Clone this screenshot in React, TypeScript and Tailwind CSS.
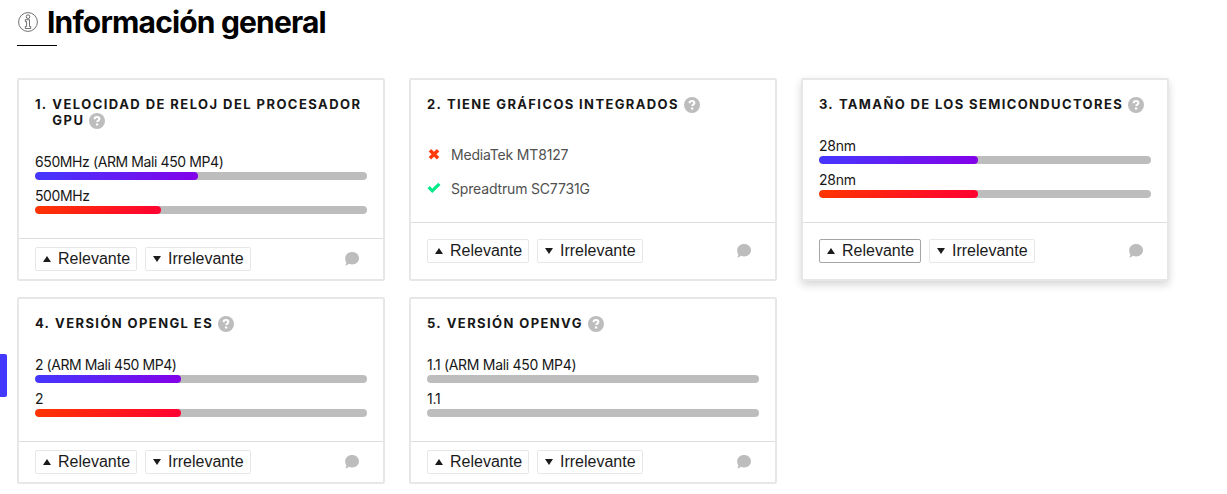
type Bar = { label: string; width: number };
type CardData = {
  n: number;
  title: string[];
  titleTracking: string;
  labelTracking?: string;
  bars?: Bar[];
  active?: boolean;
};

const cards: CardData[] = [
  {
    n: 1,
    title: ["VELOCIDAD DE RELOJ DEL PROCESADOR", "GPU"],
    titleTracking: "tracking-[1.44px]",
    labelTracking: "tracking-[-0.4px]",
    bars: [
      { label: "650MHz (ARM Mali 450 MP4)", width: 163 },
      { label: "500MHz", width: 126 },
    ],
  },
  { n: 2, title: ["TIENE GRÁFICOS INTEGRADOS"], titleTracking: "tracking-[1.37px]" },
  {
    n: 3,
    title: ["TAMAÑO DE LOS SEMICONDUCTORES"],
    titleTracking: "tracking-[1.37px]",
    labelTracking: "tracking-[-0.25px]",
    active: true,
    bars: [
      { label: "28nm", width: 159 },
      { label: "28nm", width: 159 },
    ],
  },
  {
    n: 4,
    title: ["VERSIÓN OPENGL ES"],
    titleTracking: "tracking-[1.4px]",
    labelTracking: "tracking-[-0.43px]",
    bars: [
      { label: "2 (ARM Mali 450 MP4)", width: 146 },
      { label: "2", width: 146 },
    ],
  },
  {
    n: 5,
    title: ["VERSIÓN OPENVG"],
    titleTracking: "tracking-[1.4px]",
    labelTracking: "tracking-[-0.3px]",
    bars: [
      { label: "1.1 (ARM Mali 450 MP4)", width: 0 },
      { label: "1.1", width: 0 },
    ],
  },
];

function Help() {
  return (
    <svg viewBox="0 0 16 16" className="h-4 w-4 shrink-0 translate-y-px">
      <circle cx="8" cy="8" r="8" fill="#bdbdbd" />
      <path d="M5.6 6.3C5.6 4.8 6.600 4 8 4s2.400.8 2.400 2.100c0 1.500-2.200 1.500-2.200 3" fill="none" stroke="#fff" strokeWidth="2" />
      <circle cx="8.1" cy="11.5" r="1.2" fill="#fff" />
    </svg>
  );
}

function InfoIcon() {
  return (
    <svg viewBox="0 0 20 20" className="h-5 w-5 shrink-0" fill="none" stroke="#333" strokeWidth="0.7">
      <circle cx="10" cy="10" r="9.4" />
      <circle cx="10" cy="4.7" r="1.8" />
      <path d="M7.300 7.700h4.200v6.800h1.200v2H7.300v-2h1.300V9.500H7.300z" />
    </svg>
  );
}

function Comment() {
  return (
    <svg viewBox="0 0 14 14" className="mr-2 h-3.5 w-3.5" fill="#bdbdbd">
      <path d="M7.1 0C11 0 14 2.7 14 6.3s-3 6.2-6.9 6.2c-1.2 0-2.3-.2-3.3-.7C2.8 12.900 1.500 13.500 0 13.500c.8-.9 1.300-1.900 1.300-3.100C.5 9.200.2 7.800.2 6.300.2 2.700 3.200 0 7.100 0z" />
    </svg>
  );
}

function Cross() {
  return (
    <svg viewBox="0 0 12 12" className="ml-px h-3 w-3 -translate-y-px" stroke="#ff3b0a" strokeWidth="3.5">
      <path d="M1.900 2.200 10.100 10.200M10.100 2.200 1.900 10.200" />
    </svg>
  );
}

function Check() {
  return (
    <svg viewBox="0 0 14 12" className="h-3 w-3.5 -translate-y-px" fill="none" stroke="#00e88a" strokeWidth="3.2">
      <path d="M1.600 5.200 5.300 8.800 12.400 1.800" />
    </svg>
  );
}

function Vote({ up, active }: { up?: boolean; active?: boolean }) {
  return (
    <button
      className={`flex h-6 items-center rounded-[2px] border pl-[7px] font-['Liberation_Sans',sans-serif] text-base leading-none text-[#1b1b1b] ${up ? "w-[102px]" : "w-[106px]"} ${active ? "border-[#a5a5a5]" : "border-[#e7e7e7]"}`}
    >
      <svg viewBox="0 0 8 6" className="mr-[7px] h-1.5 w-2" fill="#1b1b1b">
        <path d={up ? "M4 0 8 6H0z" : "M0 0h8L4 6z"} />
      </svg>
      {up ? "Relevante" : "Irrelevante"}
    </button>
  );
}

const fills = [
  "bg-[linear-gradient(135deg,#4338ff,#8500e8)]",
  "bg-[linear-gradient(135deg,#ff3600,#ff0033)]",
];

function Card({ card }: { card: CardData }) {
  return (
    <article
      className={`flex flex-col rounded-[2px] border-2 border-[#e7e7e7] bg-white ${card.active ? "shadow-[0_4px_8px_rgba(0,0,0,0.16)]" : ""}`}
    >
      <h3 className={`flex px-4 pt-4 text-[13px] leading-4 font-bold text-[#171717] ${card.titleTracking}`}>
        <span className="mr-[5px] tracking-[1.2px]">{card.n}.</span>
        <span>
          {card.title.map((line, i) => (
            <span key={line} className="flex h-4 items-center gap-[5px] whitespace-nowrap">
              {line}
              {i === card.title.length - 1 && <Help />}
            </span>
          ))}
        </span>
      </h3>
      {card.bars ? (
        <div className="flex flex-col gap-2 px-4 pt-[26px] pb-6">
          {card.bars.map((bar, i) => (
            <div key={i}>
              <div className={`mb-0.5 h-4 text-sm leading-4 text-[#171717] ${card.labelTracking}`}>{bar.label}</div>
              <div className="h-2 overflow-hidden rounded-full bg-[#bdbdbd]">
                <div className={`h-2 rounded-full ${fills[i]}`} style={{ width: bar.width }} />
              </div>
            </div>
          ))}
        </div>
      ) : (
        <ul className="px-4 pt-[26px] pb-4 text-sm tracking-[-0.17px] text-[#505050]">
          <li className="flex h-[34px] items-center">
            <span className="w-6"><Cross /></span>MediaTek MT8127
          </li>
          <li className="flex h-[34px] items-center">
            <span className="w-6"><Check /></span>Spreadtrum SC7731G
          </li>
        </ul>
      )}
      <footer className="flex flex-1 items-center gap-2 border-t border-[#dedede] px-4">
        <Vote up active={card.active} />
        <Vote />
        <span className="ml-auto"><Comment /></span>
      </footer>
    </article>
  );
}

export default function App() {
  return (
    <main className="relative h-[494px] w-full overflow-hidden bg-white pl-[17px] font-['Inter',sans-serif]">
      <header className="h-[78px]">
        <div className="flex h-[45px] items-center gap-[9px] pb-[2px] pl-px">
          <InfoIcon />
          <h2 className="text-[30px] leading-none font-bold tracking-[-0.84px] text-black">Información general</h2>
        </div>
        <div className="h-px w-10 bg-black" />
      </header>
      <section className="grid grid-cols-[368px_368px_368px] grid-rows-[203px_187px] gap-x-6 gap-y-4">
        {cards.map((card) => (
          <Card key={card.n} card={card} />
        ))}
      </section>
      <div className="absolute top-[354px] left-0 h-[43px] w-[7px] rounded-r-[2px] bg-[#4338ff]" />
    </main>
  );
}
